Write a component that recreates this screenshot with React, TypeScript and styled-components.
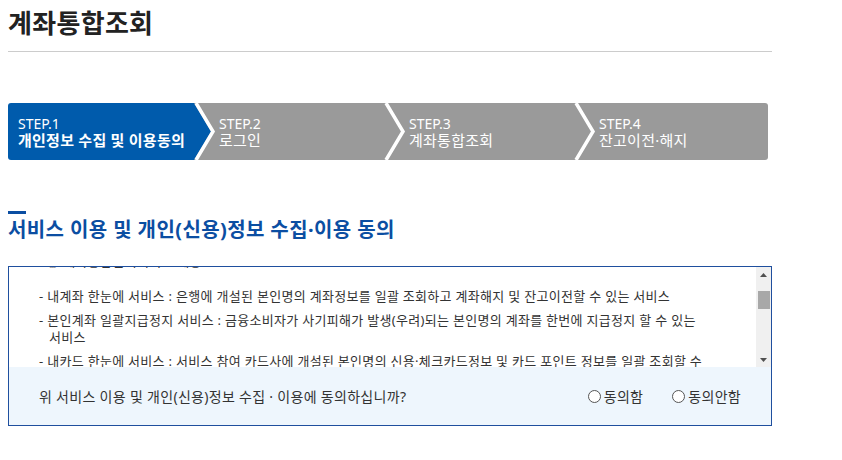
import { useLayoutEffect, useRef, useState } from "react";
import styled, { createGlobalStyle } from "styled-components";

const GlobalStyle = createGlobalStyle`
  * {
    box-sizing: border-box;
  }
  body {
    margin: 0;
    background: #fff;
    font-family: "Noto Sans", "Noto Sans CJK KR", sans-serif;
    color: #333;
  }
`;

const Page = styled.div`
  width: 764px;
  margin: 0 8px;
`;

const Title = styled.h1`
  margin: 0;
  padding: 6px 0 11px;
  font-size: 26px;
  line-height: 34px;
  font-weight: 700;
  letter-spacing: 0.3px;
  color: #222;
  border-bottom: 1px solid #ccc;
`;

const Steps = styled.ol`
  list-style: none;
  margin: 51px 0 0;
  padding: 0;
  display: flex;
  width: 760px;
  height: 57px;
  border-radius: 3px;
  overflow: hidden;
`;

const Step = styled.li<{ $active?: boolean; $first?: boolean }>`
  position: relative;
  flex: 0 0 190px;
  display: flex;
  flex-direction: column;
  justify-content: center;
  padding-left: ${(p) => (p.$first ? 10 : 21)}px;
  background: ${(p) => (p.$active ? "#005bac" : "#9a9a9a")};
  color: #fff;
`;

const StepNo = styled.span`
  font-size: 14px;
  line-height: 17px;
`;

const StepName = styled.span<{ $active?: boolean }>`
  font-size: 15px;
  line-height: 17px;
  letter-spacing: 0.25px;
  font-weight: ${(p) => (p.$active ? 700 : 400)};
`;

const Chevron = styled.svg`
  position: absolute;
  top: 0;
  left: 178px;
  z-index: 1;
`;

const Arrow = ({ from, to }: { from: string; to: string }) => (
  <Chevron width="30" height="57" viewBox="0 0 30 57">
    <rect width="30" height="57" fill={to} />
    <polygon points="0,0 8,0 25,28.5 8,57 0,57" fill={from} />
    <polyline points="10,0 27,28.5 10,57" fill="none" stroke="#fff" strokeWidth="3.5" />
  </Chevron>
);

const Section = styled.section`
  margin-top: 51px;
`;

const SectionTitle = styled.h2`
  margin: 0;
  font-size: 20px;
  line-height: 26px;
  font-weight: 700;
  letter-spacing: 0.4px;
  color: #0b4ea2;
  &::before {
    content: "";
    display: block;
    width: 18px;
    height: 3px;
    margin-bottom: 3px;
    background: #0b4ea2;
  }
`;

const AgreeBox = styled.div`
  margin-top: 23px;
  border: 1px solid #1f4f9e;
`;

const ScrollArea = styled.div`
  display: flex;
  height: 100px;
`;

const Viewport = styled.div`
  position: relative;
  flex: 1;
  overflow: hidden;
  padding: 18px 40px 12px 30px;
  font-size: 13px;
  line-height: 17px;
  letter-spacing: 0.3px;
  word-break: keep-all;
  color: #333;
`;

const ScrollBar = styled.div`
  display: flex;
  flex-direction: column;
  width: 15px;
  background: #f0f0f0;
`;

const ScrollButton = styled.div`
  display: flex;
  align-items: center;
  justify-content: center;
  height: 15px;
`;

const Track = styled.div`
  flex: 1;
  padding: 0 1px 0 2px;
`;

const Thumb = styled.div`
  background: #a8a8a8;
`;

const Heading = styled.p<{ $gap?: number }>`
  margin: ${(p) => p.$gap ?? 0}px 0 0;
`;

const List = styled.ul<{ $gap?: number }>`
  list-style: none;
  margin: ${(p) => p.$gap ?? 18}px 0 0;
  padding: 0;
`;

const Item = styled.li`
  padding-left: 10px;
  text-indent: -10px;
  & + & {
    margin-top: 7px;
  }
`;

const Question = styled.div`
  display: flex;
  align-items: center;
  justify-content: space-between;
  height: 58px;
  padding: 0 30px;
  background: #eef6fd;
  font-size: 14px;
  letter-spacing: 0.3px;
  color: #333;
`;

const Choices = styled.div`
  display: flex;
  gap: 29px;
`;

const Choice = styled.label`
  display: flex;
  align-items: center;
  gap: 3px;
  font-size: 14px;
  color: #333;
`;

const Radio = styled.input`
  appearance: none;
  margin: 0;
  width: 13px;
  height: 13px;
  border: 1px solid #555;
  border-radius: 50%;
  background: #fff;
`;

const steps = [
  { no: "STEP.1", name: "개인정보 수집 및 이용동의" },
  { no: "STEP.2", name: "로그인" },
  { no: "STEP.3", name: "계좌통합조회" },
  { no: "STEP.4", name: "잔고이전·해지" },
];

const services = [
  "- 내계좌 한눈에 서비스 : 은행에 개설된 본인명의 계좌정보를 일괄 조회하고 계좌해지 및 잔고이전할 수 있는 서비스",
  "- 본인계좌 일괄지급정지 서비스 : 금융소비자가 사기피해가 발생(우려)되는 본인명의 계좌를 한번에 지급정지 할 수 있는 서비스",
  "- 내카드 한눈에 서비스 : 서비스 참여 카드사에 개설된 본인명의 신용·체크카드정보 및 카드 포인트 정보를 일괄 조회할 수 있는 서비스",
];

const TRACK = 70;

export default function App() {
  const viewRef = useRef<HTMLDivElement>(null);
  const firstRef = useRef<HTMLUListElement>(null);
  const [thumb, setThumb] = useState({ top: 8, height: 17 });

  useLayoutEffect(() => {
    const view = viewRef.current;
    if (!view || !firstRef.current) return;
    view.scrollTop = firstRef.current.offsetTop - 21;
    const h = Math.max(12, Math.round((TRACK * view.clientHeight) / view.scrollHeight));
    const max = view.scrollHeight - view.clientHeight;
    const top = max > 0 ? Math.round(((TRACK - h) * view.scrollTop) / max) : 0;
    setThumb({ top, height: h });
  }, []);

  return (
    <Page>
      <GlobalStyle />
      <Title>계좌통합조회</Title>

      <Steps>
        {steps.map((s, i) => (
          <Step key={s.no} $active={i === 0} $first={i === 0}>
            <StepNo>{s.no}</StepNo>
            <StepName $active={i === 0}>{s.name}</StepName>
            {i < steps.length - 1 && (
              <Arrow from={i === 0 ? "#005bac" : "#9a9a9a"} to="#9a9a9a" />
            )}
          </Step>
        ))}
      </Steps>

      <Section>
        <SectionTitle>서비스 이용 및 개인(신용)정보 수집·이용 동의</SectionTitle>
        <AgreeBox>
          <ScrollArea>
            <Viewport ref={viewRef}>
              <Heading>1. 수집·이용 목적</Heading>
              <Heading>&nbsp;&nbsp;○ 계좌통합관리서비스 제공</Heading>
              <List ref={firstRef}>
                {services.map((t) => (
                  <Item key={t}>{t}</Item>
                ))}
              </List>
              <Heading $gap={16}>2. 수집·이용 항목</Heading>
              <List $gap={6}>
                <Item>- 성명, 생년월일, 휴대폰번호, 통신사, 성별, 내·외국인 구분</Item>
                <Item>- 계좌정보(금융회사명, 계좌번호, 계좌종류, 잔액, 최종거래일 등)</Item>
                <Item>- 카드정보(카드사명, 카드번호, 카드종류, 포인트 등)</Item>
              </List>
              <Heading $gap={16}>3. 보유·이용 기간</Heading>
              <List $gap={6}>
                <Item>- 서비스 이용 종료 시까지 (단, 관련 법령에 따라 보존할 필요가 있는 경우 해당 기간까지 보관)</Item>
              </List>
              <Heading $gap={16}>4. 동의를 거부할 권리 및 거부 시 불이익</Heading>
              <List $gap={6}>
                <Item>- 귀하는 동의를 거부할 권리가 있으며, 동의를 거부하는 경우 서비스 이용이 제한됩니다.</Item>
              </List>
            </Viewport>
            <ScrollBar>
              <ScrollButton>
                <svg width="7" height="4" viewBox="0 0 7 4">
                  <polygon points="3.5,0 7,4 0,4" fill="#505050" />
                </svg>
              </ScrollButton>
              <Track>
                <Thumb style={{ marginTop: thumb.top, height: thumb.height }} />
              </Track>
              <ScrollButton>
                <svg width="7" height="4" viewBox="0 0 7 4">
                  <polygon points="0,0 7,0 3.5,4" fill="#505050" />
                </svg>
              </ScrollButton>
            </ScrollBar>
          </ScrollArea>
          <Question>
            <span>위 서비스 이용 및 개인(신용)정보 수집 · 이용에 동의하십니까?</span>
            <Choices>
              <Choice>
                <Radio type="radio" name="agree" />
                동의함
              </Choice>
              <Choice>
                <Radio type="radio" name="agree" />
                동의안함
              </Choice>
            </Choices>
          </Question>
        </AgreeBox>
      </Section>
    </Page>
  );
}
